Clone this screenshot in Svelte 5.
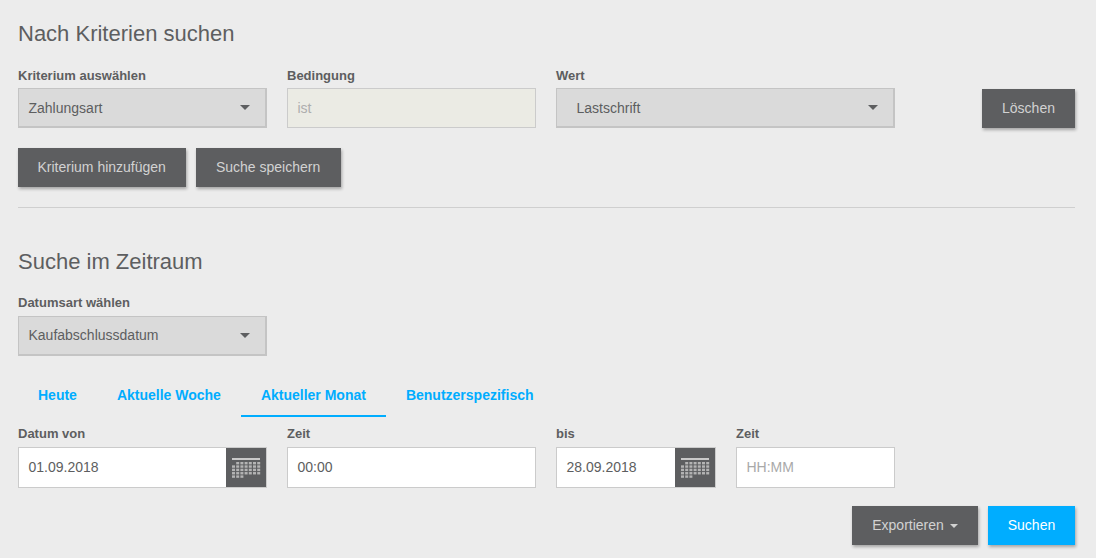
<script>
  const rows = [
    [1, 2, 3, 4, 5, 6],
    [0, 1, 2, 3, 4, 5, 6],
    [0, 1, 2, 3, 4, 5, 6],
    [0, 1, 2, 3, 4, 5, 6],
    [0, 1, 2]
  ];
  const tabs = ['Heute', 'Aktuelle Woche', 'Aktueller Monat', 'Benutzerspezifisch'];
</script>

{#snippet cal()}
  <span class="cal">
    <svg width="30" height="22" viewBox="0 0 30 22" aria-hidden="true">
      <rect x="1" y="0" width="28" height="2" fill="#c9c9c9" />
      {#each rows as r, y}
        {#each r as c}
          <rect x={1 + c * 4.2} y={4 + y * 3.35} width="3" height="2.4" fill="#b4b4b4" />
        {/each}
      {/each}
    </svg>
  </span>
{/snippet}

{#snippet caret()}
  <span class="caret"></span>
{/snippet}

<main class="page">
  <h2 class="first">Nach Kriterien suchen</h2>
  <div class="row crit">
    <div class="field w249">
      <div class="label">Kriterium auswählen</div>
      <div class="select">Zahlungsart{@render caret()}</div>
    </div>
    <div class="field w249">
      <div class="label">Bedingung</div>
      <div class="disabled">ist</div>
    </div>
    <div class="field w339">
      <div class="label">Wert</div>
      <div class="select wide">Lastschrift{@render caret()}</div>
    </div>
    <button class="btn end">Löschen</button>
  </div>
  <div class="actions">
    <button class="btn">Kriterium hinzufügen</button>
    <button class="btn">Suche speichern</button>
  </div>
  <hr />
  <h2>Suche im Zeitraum</h2>
  <div class="field w249 kind">
    <div class="label">Datumsart wählen</div>
    <div class="select">Kaufabschlussdatum{@render caret()}</div>
  </div>
  <nav class="tabs">
    {#each tabs as t, i}
      <span class="tab" class:active={i === 2}>{t}</span>
    {/each}
  </nav>
  <div class="row dates">
    <div class="field w249">
      <div class="label">Datum von</div>
      <div class="input">01.09.2018{@render cal()}</div>
    </div>
    <div class="field w249">
      <div class="label">Zeit</div>
      <div class="input">00:00</div>
    </div>
    <div class="field w160">
      <div class="label">bis</div>
      <div class="input">28.09.2018{@render cal()}</div>
    </div>
    <div class="field w159">
      <div class="label">Zeit</div>
      <div class="input ph">HH:MM</div>
    </div>
  </div>
  <div class="footer">
    <button class="btn export">Exportieren <span class="mini"></span></button>
    <button class="btn primary">Suchen</button>
  </div>
</main>

<style>
  :global(body) {
    margin: 0;
    background: #ececec;
  }
  .page {
    box-sizing: border-box;
    width: 1096px;
    height: 558px;
    padding: 0 21px 0 18px;
    font-family: "Liberation Sans", Arial, sans-serif;
    color: #5d5e60;
    font-size: 14px;
    overflow: hidden;
  }
  h2 {
    margin: 40px 0 0;
    font-size: 22px;
    line-height: 28px;
    font-weight: 400;
    color: #5d5e60;
  }
  h2.first {
    margin-top: 20px;
  }
  .row {
    display: flex;
    gap: 20px;
  }
  .crit {
    margin-top: 20px;
  }
  .field {
    flex: none;
  }
  .w249 { width: 249px; }
  .w339 { width: 339px; }
  .w160 { width: 160px; }
  .w159 { width: 159px; }
  .label {
    font-size: 13px;
    line-height: 15px;
    font-weight: 700;
    color: #5d5e60;
    margin-bottom: 6px;
  }
  .crit .label {
    margin-bottom: 5px;
  }
  .kind {
    margin-top: 19px;
  }
  .kind .select {
    padding-bottom: 2px;
  }
  .select, .disabled, .input {
    box-sizing: border-box;
    height: 40px;
    display: flex;
    align-items: center;
    padding-left: 9.5px;
    border: 1px solid #cbcbcb;
  }
  .select {
    position: relative;
    background: #dadada;
    border-width: 1px 2px 2px 1px;
    border-color: #c4c4c4;
  }
  .select.wide {
    padding-left: 19.5px;
  }
  .caret {
    position: absolute;
    right: 15px;
    top: 16px;
    width: 0;
    height: 0;
    border-left: 5px solid transparent;
    border-right: 5px solid transparent;
    border-top: 5px solid #5d5e60;
  }
  .disabled {
    background: #ebebe4;
    color: #aeaeae;
  }
  .btn {
    box-sizing: border-box;
    height: 39px;
    padding: 0 20.5px 2px 19.5px;
    border: 0;
    border-radius: 0;
    background: #5d5e60;
    color: #d2d2d2;
    font: 400 14px "Liberation Sans", Arial, sans-serif;
    box-shadow: 1px 2px 3px rgba(0, 0, 0, 0.3);
  }
  .end {
    margin: 21px 0 0 67px;
    width: 93px;
    padding: 0 0 2px;
  }
  .actions {
    display: flex;
    gap: 10px;
    margin-top: 20px;
  }
  hr {
    margin: 20px 0 0;
    border: 0;
    border-top: 1px solid #cfcfcf;
  }
  .tabs {
    display: flex;
    margin-top: 19px;
    height: 42px;
  }
  .tab {
    box-sizing: border-box;
    height: 42px;
    padding: 0 20px;
    line-height: 40px;
    font-weight: 700;
    font-size: 14px;
    color: #00adff;
    border-bottom: 2px solid transparent;
  }
  .tab.active {
    border-bottom-color: #00adff;
  }
  .dates {
    margin-top: 9px;
  }
  .input {
    position: relative;
    background: #fff;
    color: #5d5e60;
    height: 41px;
    padding-bottom: 2px;
  }
  .input.ph {
    color: #a9a9a9;
  }
  .cal {
    position: absolute;
    top: 0;
    right: 0;
    bottom: 0;
    width: 40px;
    background: #5d5e60;
    display: flex;
    align-items: center;
    justify-content: center;
  }
  .cal svg {
    margin-top: 2px;
  }
  .footer {
    display: flex;
    justify-content: flex-end;
    gap: 10px;
    margin-top: 18px;
  }
  .export {
    width: 126px;
    padding: 0 0 2px;
  }
  .primary {
    width: 87px;
    padding: 0 0 2px;
    background: #00adff;
    color: #fff;
  }
  .mini {
    display: inline-block;
    vertical-align: middle;
    margin-left: 2px;
    width: 0;
    height: 0;
    border-left: 4px solid transparent;
    border-right: 4px solid transparent;
    border-top: 4px solid #d2d2d2;
  }
</style>
